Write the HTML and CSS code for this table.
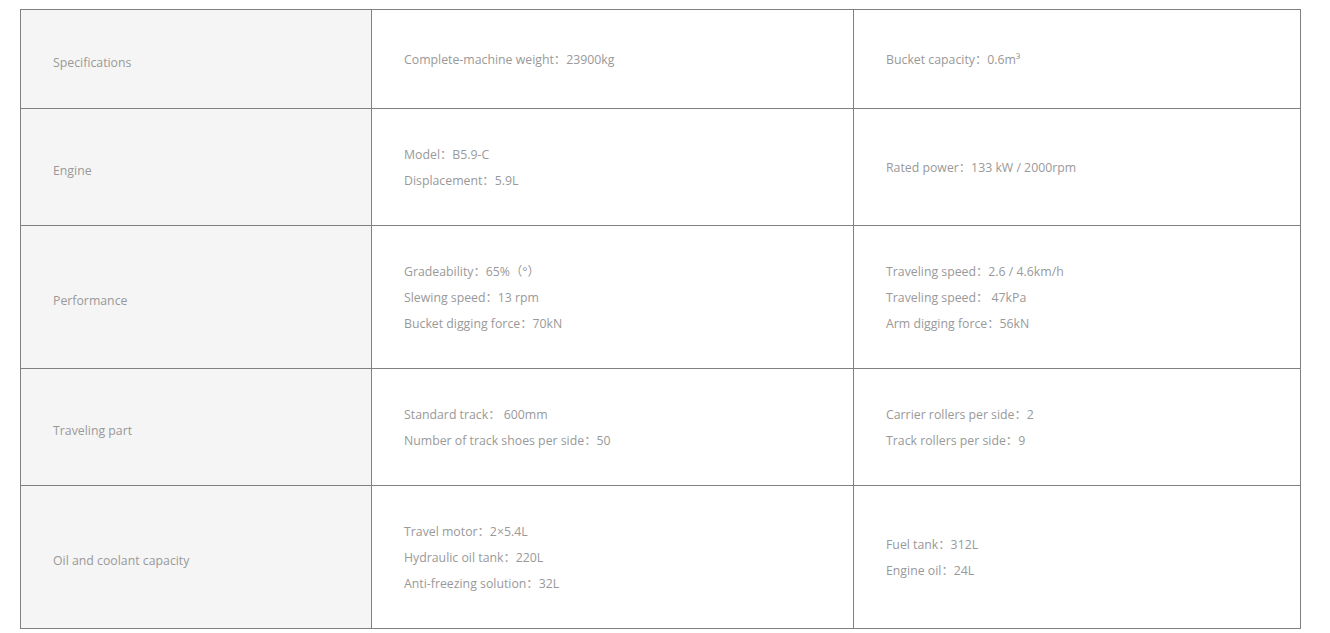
FILE: index.html
```html
<!DOCTYPE html>
<html>
<head>
<meta charset="utf-8">
<link rel="stylesheet" href="styles.css">
</head>
<body>
<table class="spec">
  <colgroup>
    <col class="c1"><col class="c2"><col class="c3">
  </colgroup>
  <tr class="r1">
    <th>Specifications</th>
    <td><p>Complete-machine weight：23900kg</p></td>
    <td><p>Bucket capacity：0.6m³</p></td>
  </tr>
  <tr>
    <th>Engine</th>
    <td><p>Model：B5.9-C</p><p>Displacement：5.9L</p></td>
    <td><p>Rated power：133 kW / 2000rpm</p></td>
  </tr>
  <tr>
    <th>Performance</th>
    <td><p>Gradeability：65%（°）</p><p>Slewing speed：13 rpm</p><p>Bucket digging force：70kN</p></td>
    <td><p>Traveling speed：2.6 / 4.6km/h</p><p>Traveling speed： 47kPa</p><p>Arm digging force：56kN</p></td>
  </tr>
  <tr>
    <th>Traveling part</th>
    <td><p>Standard track： 600mm</p><p>Number of track shoes per side：50</p></td>
    <td><p>Carrier rollers per side：2</p><p>Track rollers per side：9</p></td>
  </tr>
  <tr>
    <th>Oil and coolant capacity</th>
    <td><p>Travel motor：2×5.4L</p><p>Hydraulic oil tank：220L</p><p>Anti-freezing solution：32L</p></td>
    <td><p>Fuel tank：312L</p><p>Engine oil：24L</p></td>
  </tr>
</table>
</body>
</html>
```
FILE: styles.css
```css
html, body {
  margin: 0;
  padding: 0;
  background: #fff;
}
body {
  padding: 9px 30px 0 20px;
  font-family: "Open Sans", "Noto Sans CJK SC", sans-serif;
  font-size: 12.3px;
  color: #999;
}
.spec {
  width: 1280px;
  border-collapse: collapse;
  table-layout: fixed;
}
.c1 { width: 351px; }
.c2 { width: 482px; }
.c3 { width: 447px; }
.spec th, .spec td {
  border: 1px solid #808080;
  padding: 33px 32px 31px;
  vertical-align: middle;
  text-align: left;
  font-weight: normal;
  line-height: 26px;
}
.spec th {
  background: #f5f5f5;
  padding-top: 36px;
  padding-bottom: 28px;
}
.r1 th, .r1 td { height: 34px; }
.spec p {
  margin: 0;
}
```
